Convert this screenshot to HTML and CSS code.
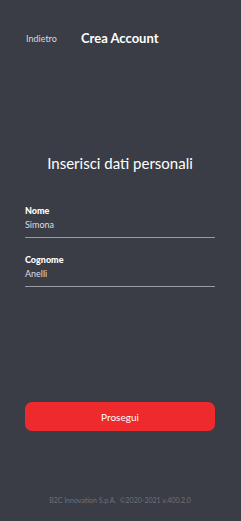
FILE: index.html
```html
<!DOCTYPE html>
<html lang="it">
<head>
  <meta charset="UTF-8">
  <meta name="viewport" content="width=device-width, initial-scale=1.0">
  <title>Crea Account</title>
  <link rel="stylesheet" href="styles.css">
</head>
<body>
  <div class="screen">
    <div class="topbar">
      <span class="back">Indietro</span>
      <span class="title">Crea Account</span>
    </div>

    <h1>Inserisci dati personali</h1>

    <div class="field">
      <div class="label">Nome</div>
      <div class="value">Simona</div>
    </div>
    <div class="field">
      <div class="label">Cognome</div>
      <div class="value">Anelli</div>
    </div>

    <div class="spacer"></div>

    <button class="next">Prosegui</button>

    <div class="footer">B2C Innovation S.p.A.&nbsp; ©2020-2021 v.400.2.0</div>
  </div>
</body>
</html>
```

FILE: styles.css
```css
body {
  margin: 0;
  background: #3a3d45;
  font-family: Lato, "Open Sans", sans-serif;
  color: white;
}

.screen {
  height: 521px;
  display: flex;
  flex-direction: column;
  padding: 0 26px 0 25px;
  box-sizing: border-box;
}

.topbar {
  display: flex;
  align-items: center;
  padding-top: 30px;
  height: 16px;
}

.back {
  font-size: 9px;
  color: #d8d9dc;
  margin-left: 1px;
  width: 55px;
}

.title {
  font-size: 13px;
  font-weight: bold;
}

h1 {
  font-size: 15px;
  font-weight: normal;
  text-align: center;
  margin: 108px 0 33px;
  line-height: 18px;
}

.field {
  border-bottom: 1.5px solid #9a9ca1;
  padding-bottom: 7px;
  margin-bottom: 16px;
}

.label {
  font-size: 9px;
  font-weight: 900;
  line-height: 11px;
}

.value {
  font-size: 9px;
  color: #dcdde0;
  line-height: 11px;
  margin-top: 3px;
}

.spacer {
  flex: 1;
}

.next {
  background: #ee2a2c;
  color: white;
  border: none;
  border-radius: 7px;
  height: 29px;
  font-family: inherit;
  font-size: 10px;
  margin-bottom: 65px;
}

.footer {
  font-size: 7px;
  color: #6e7178;
  text-align: center;
  margin-bottom: 17px;
}
```
